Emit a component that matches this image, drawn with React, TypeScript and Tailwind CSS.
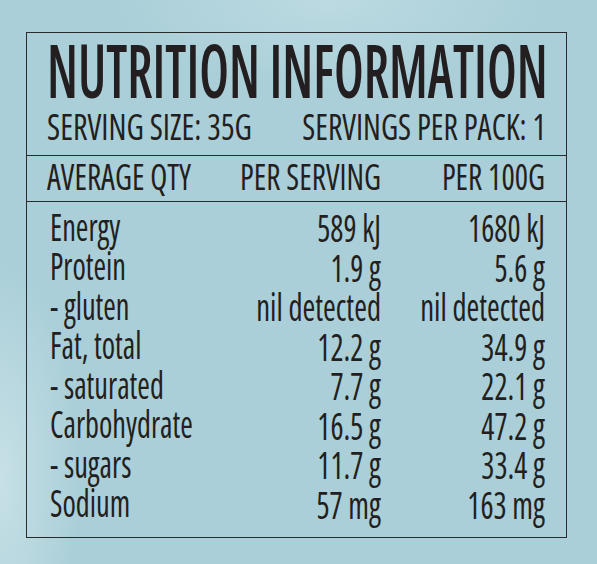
const rows: [string, string, string][] = [
  ['Energy', '589 kJ', '1680 kJ'],
  ['Protein', '1.9 g', '5.6 g'],
  ['- gluten', 'nil detected', 'nil detected'],
  ['Fat, total', '12.2 g', '34.9 g'],
  ['- saturated', '7.7 g', '22.1 g'],
  ['Carbohydrate', '16.5 g', '47.2 g'],
  ['- sugars', '11.7 g', '33.4 g'],
  ['Sodium', '57 mg', '163 mg'],
]

// Open Sans is wider than the label's condensed face, so type is set smaller
// and stretched upward from its baseline (origin 88.8% of a 1em box).
const heading = 'block leading-none text-[31.3px] font-medium mt-[4.2px] scale-y-[1.149] origin-[0_88.8%]'

export default function App() {
  return (
    <div className="w-[597px] h-[564px] overflow-hidden bg-[#aacfd8] bg-[radial-gradient(ellipse_80px_220px_at_0%_85%,rgba(228,241,245,0.5),transparent),radial-gradient(ellipse_220px_90px_at_55%_0%,rgba(215,235,241,0.4),transparent)] pt-[32px] pl-[26px] font-['Open_Sans',sans-serif] font-stretch-condensed text-[#231f20] whitespace-nowrap">
      <div className="w-[541px] h-[506px] border border-[#2a2a2a] flex flex-col">
        {/* title block */}
        <div className="px-[20px] pt-[1px] pb-[11px] border-b border-[#2a2a2a]">
          <div className="flex h-[74px]">
            <span className="block leading-none text-[52.3px] font-semibold mt-[19.3px] scale-y-[1.414] origin-[0_88.8%]">
              NUTRITION INFORMATION
            </span>
          </div>
          <div className="flex justify-between h-[36px] font-medium">
            <span className="block leading-none text-[32px] mt-[3.5px] scale-y-[1.124] origin-[0_88.8%]">
              SERVING SIZE: 35G
            </span>
            <span className="block leading-none text-[31.7px] mt-[3.8px] scale-y-[1.136] origin-[0_88.8%]">
              SERVINGS PER PACK: 1
            </span>
          </div>
        </div>

        {/* column headings */}
        <div className="grid grid-cols-[174px_160px_164px] px-[20px] pt-[3px] pb-[7px] border-b border-[#2a2a2a] h-[46px]">
          <div className="flex">
            <span className={heading}>AVERAGE QTY</span>
          </div>
          <div className="flex justify-end">
            <span className={heading}>PER SERVING</span>
          </div>
          <div className="flex justify-end">
            <span className={heading}>PER 100G</span>
          </div>
        </div>

        {/* values */}
        <div className="pr-[20px] pl-[23px] pt-[6px]">
          {rows.map(([name, serving, per100]) => (
            <div key={name} className="grid grid-cols-[171px_160px_164px] h-[39.5px]">
              <div className="flex">
                <span className="block leading-none text-[30.4px] mt-[7.5px] scale-y-[1.25] origin-[0_88.8%]">{name}</span>
              </div>
              <div className="flex justify-end">
                <span className="block leading-none text-[30.8px] mt-[7.2px] scale-y-[1.235] origin-[0_88.8%]">{serving}</span>
              </div>
              <div className="flex justify-end">
                <span className="block leading-none text-[30.8px] mt-[7.2px] scale-y-[1.235] origin-[0_88.8%]">{per100}</span>
              </div>
            </div>
          ))}
        </div>
      </div>
    </div>
  )
}
